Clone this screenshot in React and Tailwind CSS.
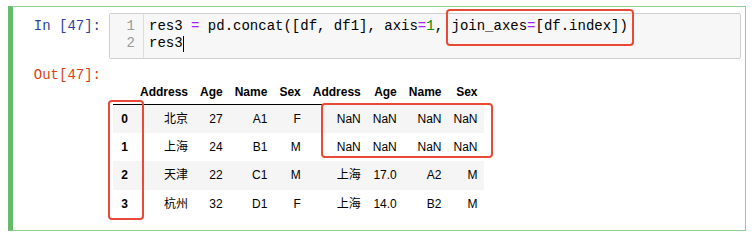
import React from "react";

const mono = { fontFamily: '"Liberation Mono", "DejaVu Sans Mono", monospace' };
const sans = { fontFamily: '"Liberation Sans", "Noto Sans CJK SC", Arial, sans-serif' };

const headers = ["Address", "Age", "Name", "Sex", "Address", "Age", "Name", "Sex"];
const rows = [
  ["0", "北京", "27", "A1", "F", "NaN", "NaN", "NaN", "NaN"],
  ["1", "上海", "24", "B1", "M", "NaN", "NaN", "NaN", "NaN"],
  ["2", "天津", "22", "C1", "M", "上海", "17.0", "A2", "M"],
  ["3", "杭州", "32", "D1", "F", "上海", "14.0", "B2", "M"],
];

export default function App() {
  return (
    <div className="relative w-[756px] h-[240px] bg-white overflow-hidden">
      <div className="pt-[6px] pl-[8px]">
        <div className="w-[738px] h-[225px] border border-[#8fcf92] border-l-[5px] border-l-[#66bb6a] pt-[6px] pr-[4px]">
          {/* input row */}
          <div className="flex">
            <div
              className="w-[96px] shrink-0 text-right pr-[8px] pt-[5px] text-[14px] leading-[17px] text-[#303f9f]"
              style={mono}
            >
              In&nbsp;[47]:
            </div>
            <div className="flex w-[632px] h-[46px] border border-[#cfcfcf] rounded-[2px] bg-[#f7f7f7]">
              <div
                className="w-[34px] shrink-0 border-r border-[#dddddd] bg-[#f7f7f7] text-right pr-[8px] pt-[4px] text-[14px] leading-[17px] text-[#999999]"
                style={mono}
              >
                <div>1</div>
                <div>2</div>
              </div>
              <div className="pl-[5px] pt-[4px] text-[14px] leading-[17px] text-black whitespace-pre" style={mono}>
                <div>
                  res3 <span className="text-[#aa22ff]">=</span> pd.concat([df, df1], axis
                  <span className="text-[#aa22ff]">=</span>
                  <span className="text-[#008800]">1</span>, join_axes
                  <span className="text-[#aa22ff]">=</span>[df.index])
                </div>
                <div className="flex items-center">
                  <span>res3</span>
                  <span className="inline-block w-[1px] h-[16px] bg-black" />
                </div>
              </div>
            </div>
          </div>
          {/* output row */}
          <div className="flex mt-[7px]">
            <div
              className="w-[96px] shrink-0 text-right pr-[8px] pt-[1px] text-[14px] leading-[17px] text-[#d84315]"
              style={mono}
            >
              Out[47]:
            </div>
            <div className="pl-[4px] pt-[14px]">
              <table className="border-collapse text-[12px] text-black" style={sans}>
                <thead>
                  <tr className="h-[24px] border-b border-black">
                    <th className="w-[21px] px-[6px]"></th>
                    {headers.map((h, i) => (
                      <th key={i} className="px-[6px] pb-[5px] align-bottom text-right font-bold leading-[14px]">
                        {h}
                      </th>
                    ))}
                  </tr>
                </thead>
                <tbody>
                  {rows.map((r, ri) => (
                    <tr key={ri} className={`h-[28.5px] ${ri % 2 === 0 ? "bg-[#f5f5f5]" : "bg-white"}`}>
                      <th className="w-[21px] px-[6px] text-right font-bold leading-[14px]">{r[0]}</th>
                      {r.slice(1).map((c, ci) => (
                        <td key={ci} className="px-[6px] text-right leading-[14px]">
                          {c}
                        </td>
                      ))}
                    </tr>
                  ))}
                </tbody>
              </table>
            </div>
          </div>
        </div>
      </div>
      {/* red annotations */}
      <div className="absolute left-[446px] top-[9px] w-[188px] h-[37px] border-2 border-[#ea4a35] rounded-[4px]" />
      <div className="absolute left-[108px] top-[100px] w-[36px] h-[120px] border-2 border-[#ea4a35] rounded-[4px]" />
      <div className="absolute left-[321px] top-[103px] w-[172px] h-[55px] border-2 border-[#ea4a35] rounded-[4px]" />
    </div>
  );
}
